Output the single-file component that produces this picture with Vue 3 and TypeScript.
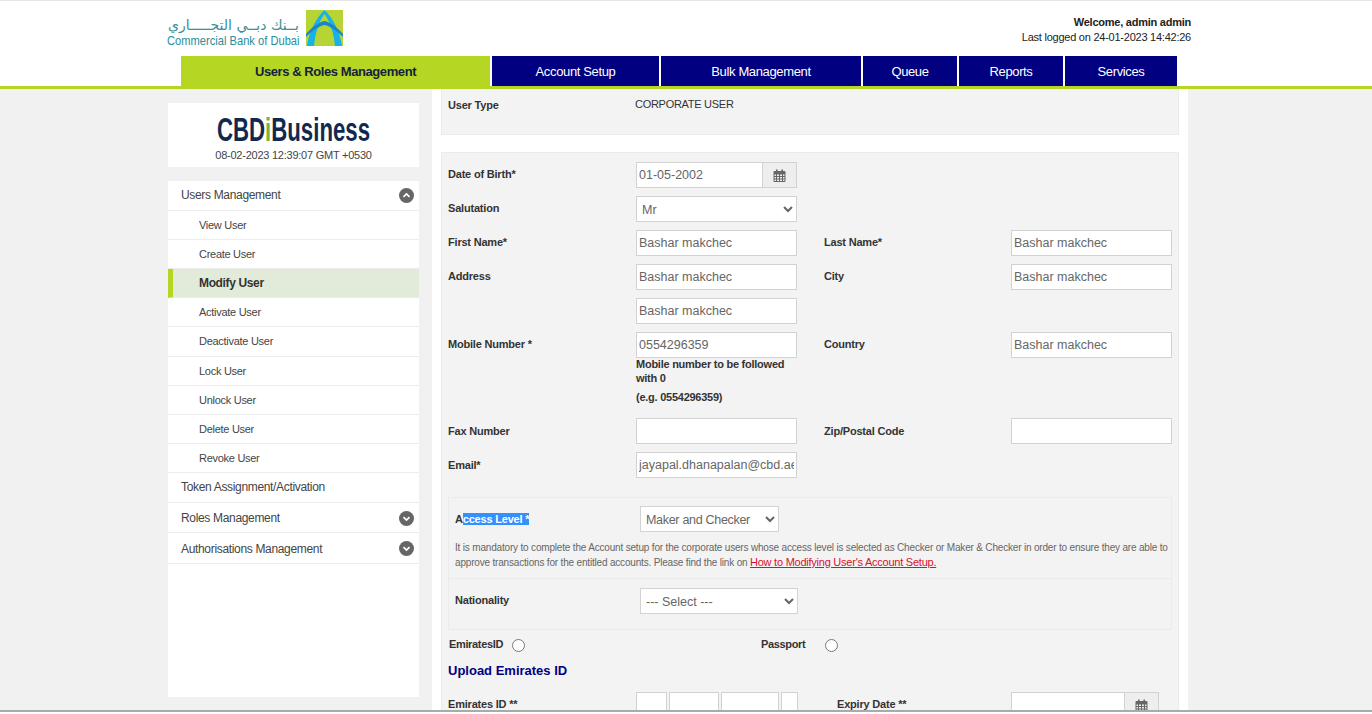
<template>
  <div class="page">
    <header class="header">
      <div class="header-top">
        <div class="logo">
          <div class="logo-text">
            <div class="logo-ar" dir="rtl">بــنك دبــي التجـــــاري</div>
            <div class="logo-en">Commercial Bank of Dubai</div>
          </div>
          <svg class="logo-mark" width="37" height="36" viewBox="0 0 37 36">
            <rect width="37" height="36" fill="#b6d433" />
            <path d="M1 36 C3 22 10 8 18.5 0 C27 8 34 22 36 36 L29 36 C28 24 24 11 18.5 4 C13 11 9 24 8 36 Z" fill="#18b2e8" />
            <path d="M0 24 C6 17 13 12 18.5 11 C24 12 31 17 37 24 L37 27 C31 21 24 16 18.5 15 C13 16 6 21 0 27 Z" fill="#1a86c8" />
          </svg>
        </div>
        <div class="welcome">
          <div class="welcome-name">Welcome, admin admin</div>
          <div>Last logged on 24-01-2023 14:42:26</div>
        </div>
      </div>
      <nav class="nav">
        <a
          v-for="item in navItems"
          :key="item.label"
          class="nav-item"
          :class="{ active: item.active }"
          :style="{ width: item.width + 'px' }"
        >{{ item.label }}</a>
      </nav>
    </header>

    <div class="content">
      <aside class="sidebar">
        <div class="brand">
          <div class="brand-name">CBD<span class="brand-i">i</span>Business</div>
          <div class="brand-date">08-02-2023 12:39:07 GMT +0530</div>
        </div>
        <div class="menu">
          <div class="menu-row open">
            <span>Users Management</span>
            <svg class="toggle" width="15" height="15" viewBox="0 0 15 15">
              <circle cx="7.5" cy="7.5" r="7.5" fill="#666" />
              <path d="M4.5 8.8 L7.5 5.9 L10.5 8.8" fill="none" stroke="#fff" stroke-width="1.7" />
            </svg>
          </div>
          <div
            v-for="sub in subItems"
            :key="sub"
            class="menu-sub"
            :class="{ current: sub === 'Modify User' }"
          >{{ sub }}</div>
          <div class="menu-row">
            <span>Token Assignment/Activation</span>
          </div>
          <div v-for="row in closedRows" :key="row" class="menu-row closed">
            <span>{{ row }}</span>
            <svg class="toggle" width="15" height="15" viewBox="0 0 15 15">
              <circle cx="7.5" cy="7.5" r="7.5" fill="#666" />
              <path d="M4.5 6.2 L7.5 9.1 L10.5 6.2" fill="none" stroke="#fff" stroke-width="1.7" />
            </svg>
          </div>
        </div>
      </aside>

      <main class="main">
        <section class="panel type-panel">
          <label class="label">User Type</label>
          <span class="type-value">CORPORATE USER</span>
        </section>

        <section class="panel form-panel">
          <div class="form-grid">
            <label class="label">Date of Birth*</label>
            <div class="date-group">
              <input class="field" value="01-05-2002" />
              <span class="addon">
                <svg width="13" height="13" viewBox="0 0 13 13">
                  <path d="M1 2.5 H12 V12.5 H1 Z M1 5 H12 M1 7.5 H12 M1 10 H12 M3.5 5 V12.5 M6.5 5 V12.5 M9.5 5 V12.5" fill="none" stroke="#666" stroke-width="1" />
                  <path d="M1 2 H12 V5 H1 Z" fill="#666" />
                  <rect x="3" y="0.5" width="1.6" height="3" fill="#666" />
                  <rect x="8.4" y="0.5" width="1.6" height="3" fill="#666" />
                </svg>
              </span>
            </div>
            <span class="blank"></span>

            <label class="label">Salutation</label>
            <select class="field select"><option>Mr</option></select>
            <span class="blank"></span>

            <label class="label">First Name*</label>
            <input class="field" value="Bashar makchec" />
            <label class="label right-label">Last Name*</label>
            <input class="field" value="Bashar makchec" />

            <label class="label">Address</label>
            <input class="field" value="Bashar makchec" />
            <label class="label right-label">City</label>
            <input class="field" value="Bashar makchec" />

            <span></span>
            <input class="field" value="Bashar makchec" />
            <span class="blank"></span>

            <label class="label">Mobile Number *</label>
            <div>
              <input class="field" value="0554296359" />
              <div class="hint">
                <p>Mobile number to be followed with 0</p>
                <p class="hint-eg">(e.g. 0554296359)</p>
              </div>
            </div>
            <label class="label right-label">Country</label>
            <input class="field" value="Bashar makchec" />

            <label class="label low">Fax Number</label>
            <input class="field" />
            <label class="label right-label low">Zip/Postal Code</label>
            <input class="field" />

            <label class="label low">Email*</label>
            <input class="field" value="jayapal.dhanapalan@cbd.ae" />
            <span class="blank"></span>
          </div>

          <div class="sub-box access-box">
            <div class="sub-row">
              <label class="label sub-label low">A<span class="selected">ccess Level *</span></label>
              <select class="field select access-select"><option>Maker and Checker</option></select>
            </div>
            <p class="note">
              It is mandatory to complete the Account setup for the corporate users whose access level is selected as Checker or Maker &amp; Checker in order to ensure they are able to approve transactions for the entitled accounts. Please find the link on
              <a class="note-link">How to Modifying User's Account Setup.</a>
            </p>
          </div>

          <div class="sub-box nationality-box">
            <div class="sub-row">
              <label class="label sub-label">Nationality</label>
              <select class="field select nationality-select"><option>--- Select ---</option></select>
            </div>
          </div>

          <div class="id-type">
            <div class="id-option emirates">
              <label class="label radio-label">EmiratesID</label>
              <input type="radio" name="idtype" />
            </div>
            <div class="id-option passport">
              <label class="label radio-label">Passport</label>
              <input type="radio" name="idtype" />
            </div>
          </div>

          <h3 class="upload-title">Upload Emirates ID</h3>

          <div class="upload-row">
            <label class="label eid-label">Emirates ID **</label>
            <div class="eid-parts">
              <input class="field eid1" />
              <input class="field eid2" />
              <input class="field eid3" />
              <input class="field eid4" />
            </div>
            <label class="label expiry-label">Expiry Date **</label>
            <div class="date-group expiry-group">
              <input class="field" />
              <span class="addon">
                <svg width="13" height="13" viewBox="0 0 13 13">
                  <path d="M1 2.5 H12 V12.5 H1 Z M1 5 H12 M1 7.5 H12 M1 10 H12 M3.5 5 V12.5 M6.5 5 V12.5 M9.5 5 V12.5" fill="none" stroke="#666" stroke-width="1" />
                  <path d="M1 2 H12 V5 H1 Z" fill="#666" />
                  <rect x="3" y="0.5" width="1.6" height="3" fill="#666" />
                  <rect x="8.4" y="0.5" width="1.6" height="3" fill="#666" />
                </svg>
              </span>
            </div>
          </div>
        </section>
      </main>
    </div>

    <div class="window-edge"></div>
  </div>
</template>

<script setup lang="ts">
interface NavItem {
  label: string
  width: number
  active?: boolean
}

const navItems: NavItem[] = [
  { label: 'Users & Roles Management', width: 309, active: true },
  { label: 'Account Setup', width: 167 },
  { label: 'Bulk Management', width: 200 },
  { label: 'Queue', width: 94 },
  { label: 'Reports', width: 104 },
  { label: 'Services', width: 112 }
]

const subItems = [
  'View User',
  'Create User',
  'Modify User',
  'Activate User',
  'Deactivate User',
  'Lock User',
  'Unlock User',
  'Delete User',
  'Revoke User'
]

const closedRows = ['Roles Management', 'Authorisations Management']
</script>

<style>
html,
body {
  margin: 0;
  overflow: hidden;
}
</style>

<style scoped>
.page {
  position: relative;
  height: 714px;
  overflow: hidden;
  background: #f1f1f1;
  font-family: "Liberation Sans", Arial, sans-serif;
  color: #333;
}

.header {
  box-sizing: border-box;
  height: 89px;
  background: #fff;
  border-top: 1px solid #e6e6e6;
  border-bottom: 3px solid #b5d623;
}

.header-top {
  display: flex;
  justify-content: space-between;
  height: 55px;
  padding: 9px 181px 0 167px;
  box-sizing: border-box;
}

.logo {
  display: flex;
  gap: 7px;
}

.logo-text {
  width: 132px;
  flex: none;
  color: #2b8d99;
}

.logo-ar {
  box-sizing: border-box;
  height: 23px;
  padding-top: 6px;
  font-family: "DejaVu Sans", sans-serif;
  font-size: 14px;
  line-height: 18px;
  white-space: nowrap;
  color: #3a8f98;
}

.logo-en {
  font-size: 13px;
  line-height: 15px;
  white-space: nowrap;
  transform: scaleX(0.857);
  transform-origin: left center;
}

.logo-mark {
  flex: none;
}

.welcome {
  padding-top: 5px;
  text-align: right;
  font-size: 11px;
  line-height: 15px;
  letter-spacing: -0.24px;
  color: #222;
}

.welcome-name {
  font-weight: bold;
}

.nav {
  display: flex;
  gap: 2px;
  margin-left: 181px;
  height: 30px;
}

.nav-item {
  display: flex;
  align-items: center;
  justify-content: center;
  background: #000080;
  color: #fff;
  font-size: 13px;
  letter-spacing: -0.36px;
}

.nav-item.active {
  background: #b5d623;
  color: #14213d;
  font-weight: bold;
  letter-spacing: -0.42px;
}

.content {
  display: flex;
  padding-left: 168px;
}

.sidebar {
  width: 251px;
  margin-top: 14px;
}

.brand {
  height: 64px;
  background: #fff;
  text-align: center;
  overflow: hidden;
}

.brand-name {
  margin-top: 11px;
  font-size: 33px;
  line-height: 32px;
  font-weight: bold;
  color: #12294f;
  white-space: nowrap;
  transform: scaleX(0.673);
}

.brand-i {
  color: #7fb23a;
}

.brand-date {
  margin-top: 3px;
  font-size: 11px;
  line-height: 13px;
  letter-spacing: -0.24px;
  color: #444;
}

.menu {
  height: 516px;
  margin-top: 14px;
  background: #fff;
}

.menu-row {
  box-sizing: border-box;
  display: flex;
  align-items: center;
  justify-content: space-between;
  height: 30px;
  padding: 0 5px 0 13px;
  border-bottom: 1px solid #ececec;
  font-size: 12px;
  letter-spacing: -0.33px;
  color: #444;
}

.menu-row.open span {
  margin-bottom: 2px;
}

.menu-row.closed {
  padding-top: 2px;
}

.menu-row:last-child {
  height: 31px;
}

.menu-sub {
  box-sizing: border-box;
  display: flex;
  align-items: center;
  height: 29.11px;
  padding-left: 31px;
  border-bottom: 1px solid #ececec;
  font-size: 11px;
  letter-spacing: -0.28px;
  color: #444;
}

.menu-sub.current {
  padding-left: 26px;
  border-left: 5px solid #b5d623;
  background: #e2ead9;
  font-size: 12px;
  font-weight: bold;
  letter-spacing: -0.36px;
  color: #333;
}

.main {
  box-sizing: border-box;
  width: 756px;
  height: 625px;
  margin-left: 13px;
  padding: 0 9px;
  background: #fff;
}

.panel {
  box-sizing: border-box;
  background: #f3f3f3;
  border: 1px solid #ebebeb;
  border-top: 0;
}

.type-panel {
  display: flex;
  height: 46px;
  padding: 10px 6px 0;
}

.type-panel .label {
  width: 187px;
  padding-top: 0;
}

.type-value {
  font-size: 11px;
  line-height: 11px;
  letter-spacing: -0.28px;
  color: #333;
}

.form-panel {
  height: 600px;
  margin-top: 17px;
  padding: 9px 6px 0;
  border-top: 1px solid #ebebeb;
}

.form-grid {
  display: grid;
  grid-template-columns: 188px 161px 214px 161px;
  row-gap: 8px;
  align-items: start;
}

.blank {
  grid-column: span 2;
}

.right-label {
  margin-left: 27px;
}

.label {
  display: block;
  padding-top: 6px;
  font-size: 11px;
  line-height: 13px;
  font-weight: bold;
  letter-spacing: -0.2px;
  color: #333;
}

.label.low {
  padding-top: 7px;
}

.field {
  box-sizing: border-box;
  display: block;
  width: 161px;
  height: 26px;
  margin: 0;
  padding: 0 2px;
  border: 1px solid #d2d2d2;
  border-radius: 0;
  background: #fff;
  font-family: "Liberation Sans", Arial, sans-serif;
  font-size: 12.5px;
  color: #666;
  outline: none;
}

.select {
  padding: 2px 0 0 1px;
}

.date-group {
  display: flex;
  width: 161px;
}

.date-group .field {
  flex: 1;
  width: auto;
  min-width: 0;
}

.addon {
  box-sizing: border-box;
  display: flex;
  align-items: center;
  justify-content: center;
  width: 34px;
  height: 26px;
  border: 1px solid #d2d2d2;
  border-left: 0;
  background: #eee;
}

.hint {
  margin-top: -1px;
  padding-bottom: 6px;
  font-size: 11px;
  line-height: 14px;
  font-weight: bold;
  letter-spacing: -0.25px;
  color: #333;
}

.hint p {
  margin: 0;
}

.hint-eg {
  padding-top: 5px;
}

.sub-box {
  box-sizing: border-box;
  width: 724px;
  border: 1px solid #ebebeb;
  padding: 0 6px;
}

.access-box {
  height: 82px;
  margin-top: 19px;
  padding: 8px 0 0 6px;
}

.nationality-box {
  height: 52px;
  margin-top: -1px;
  padding-top: 9px;
}

.sub-row {
  display: flex;
}

.sub-label {
  width: 185px;
}

.selected {
  background: #3390ff;
  color: #fff;
}

.access-select {
  width: 139px;
  letter-spacing: -0.3px;
}

.nationality-select {
  width: 158px;
}

.note {
  margin: 9px 0 0;
  font-size: 10px;
  line-height: 14px;
  letter-spacing: -0.18px;
  color: #666;
}

.note-link {
  font-size: 11px;
  letter-spacing: -0.24px;
  color: #d8112d;
  text-decoration: underline;
}

.id-type {
  display: flex;
  height: 28px;
  padding-left: 1px;
}

.id-option {
  display: flex;
  align-items: center;
  height: 28px;
}

.id-option input {
  margin: 2px 0 0;
}

.label.radio-label {
  padding-top: 0;
  letter-spacing: -0.35px;
}

.emirates {
  width: 312px;
}

.emirates .radio-label {
  width: 63px;
}

.passport .radio-label {
  width: 64px;
}

.upload-title {
  margin: 0;
  padding-top: 4px;
  font-size: 13px;
  line-height: 17px;
  font-weight: bold;
  color: #000080;
}

.upload-row {
  display: flex;
  margin-top: 13px;
}

.eid-label {
  width: 188px;
  flex: none;
}

.eid-parts {
  display: flex;
  gap: 2px;
}

.eid1 {
  width: 31px;
}

.eid2 {
  width: 50px;
}

.eid3 {
  width: 58px;
}

.eid4 {
  width: 17px;
}

.expiry-label {
  width: 213px;
  flex: none;
  padding-left: 39px;
  box-sizing: border-box;
}

.expiry-group {
  width: 148px;
}

.window-edge {
  position: absolute;
  left: 0;
  right: 0;
  bottom: 0;
  height: 4px;
  background: #fff;
  border-top: 2px solid #aaa;
  box-sizing: border-box;
}
</style>
